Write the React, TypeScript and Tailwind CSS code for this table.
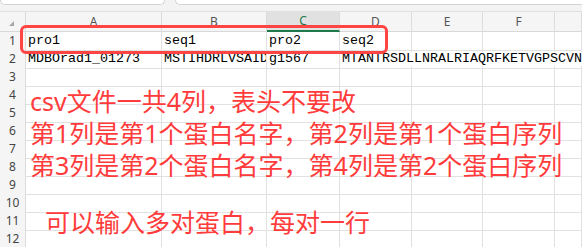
// Excel sheet screenshot with notes about the csv format

const COLS = ['A', 'B', 'C', 'D', 'E', 'F', ''];
const ROWS = [1, 2, 3, 4, 5, 6, 7, 8, 9, 10, 11, 12];

const cells: Record<string, string> = {
  '1-A': 'pro1',
  '1-B': 'seq1',
  '1-C': 'pro2',
  '1-D': 'seq2',
  '2-A': 'MDBOrad1_01273',
  '2-B': 'MSTIHDRLVSAID',
  '2-C': 'g1567',
  '2-D': 'MTANTRSDLLNRALRIAQRFKETVGPSCVN',
};

const gridCols = 'grid grid-cols-[26px_136px_105px_73px_72px_71px_72px_1fr]';

export default function App() {
  return (
    <div className="relative w-[582px] h-[247px] overflow-hidden bg-white font-['Noto_Sans','Noto_Sans_CJK_SC',sans-serif]">
      {/* toolbar bottom edge */}
      <div className="flex gap-[10px] h-[12px] bg-[#f3f3f3] border-b border-[#e0e0e0]">
        <div className="w-[165px] h-[5px] bg-white border border-t-0 border-[#d4d4d4] rounded-b-md"></div>
        <div className="flex-1 h-[5px] bg-white border border-t-0 border-r-0 border-[#d4d4d4] rounded-bl-md"></div>
      </div>

      {/* column headers */}
      <div className={`${gridCols} h-[20px] bg-[#f5f5f5] border-b border-[#d8d8d8]`}>
        <div className="relative border-r border-[#dcdcdc]">
          <div className="absolute right-[11px] bottom-[6px] w-0 h-0 border-l-[5px] border-l-transparent border-b-[5px] border-b-[#a8a8a8]"></div>
        </div>
        {COLS.map((c, i) => (
          <div
            key={i}
            className={
              c === 'C'
                ? 'flex items-center justify-center bg-[#e1e1e1] border-r border-[#dcdcdc] border-b-2 border-b-[#1e7a4a] text-[12px] text-[#1e7a4a]'
                : 'flex items-center justify-center border-r border-[#dcdcdc] text-[12px] text-[#555]'
            }
          >
            {c}
          </div>
        ))}
      </div>

      {/* rows */}
      {ROWS.map((r) => (
        <div key={r} className={`${gridCols} h-[18px]`}>
          <div className="flex items-center justify-center bg-[#f5f5f5] border-r border-b border-[#dcdcdc] text-[12px] text-[#444]">
            {r}
          </div>
          {COLS.map((c, i) => {
            const text = cells[`${r}-${c}`];
            return (
              <div
                key={i}
                className={
                  c === 'D'
                    ? 'relative z-10 border-r border-b border-[#e1e1e1]'
                    : 'relative overflow-hidden border-r border-b border-[#e1e1e1]'
                }
              >
                {text && (
                  <span className="absolute left-[2px] top-[2px] whitespace-nowrap leading-[14px] text-[13.33px] text-black font-['Liberation_Mono',monospace] bg-white">
                    {text}
                  </span>
                )}
              </div>
            );
          })}
        </div>
      ))}

      {/* red frame over the header row */}
      <div className="absolute z-20 left-[20px] top-[25px] w-[368px] h-[29px] border-[3px] border-[#ff4444] rounded-[6px]"></div>

      {/* note text box */}
      <div className="absolute z-20 left-[30px] top-[85px] text-[25px] leading-[32px] text-[#ff3b3b] whitespace-nowrap">
        <p>csv文件一共4列，表头不要改</p>
        <p>第1列是第1个蛋白名字，第2列是第1个蛋白序列</p>
        <p>第3列是第2个蛋白名字，第4列是第2个蛋白序列</p>
        <p className="mt-[25px] ml-[15px]">可以输入多对蛋白，每对一行</p>
      </div>
    </div>
  );
}
